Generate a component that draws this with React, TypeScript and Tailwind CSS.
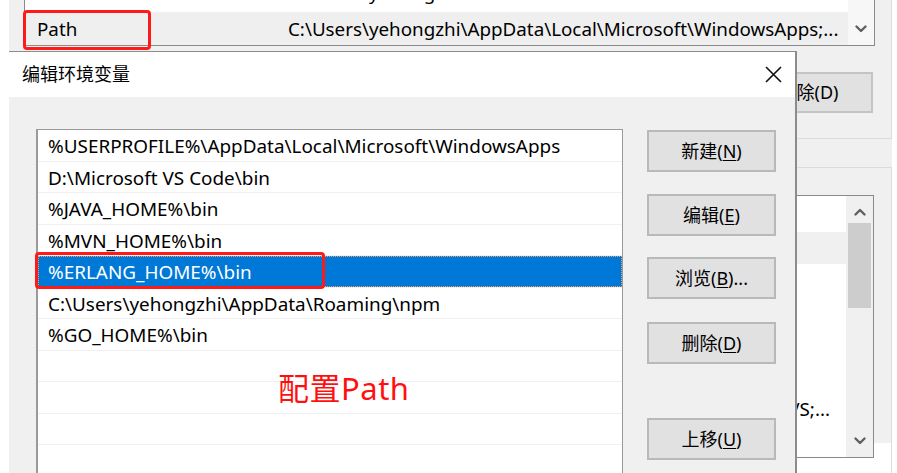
import type { ReactNode } from 'react';

const pathEntries = [
  '%USERPROFILE%\\AppData\\Local\\Microsoft\\WindowsApps',
  'D:\\Microsoft VS Code\\bin',
  '%JAVA_HOME%\\bin',
  '%MVN_HOME%\\bin',
  '%ERLANG_HOME%\\bin',
  'C:\\Users\\yehongzhi\\AppData\\Roaming\\npm',
  '%GO_HOME%\\bin',
  '',
  '',
  '',
  '',
  '',
];

const SELECTED = 4;

function Chevron({ up = false }: { up?: boolean }) {
  return (
    <svg width="12" height="8" viewBox="0 0 12 8" fill="none">
      <polyline
        points={up ? '1.5,6.5 6,2 10.5,6.5' : '1.5,1.5 6,6 10.5,1.5'}
        stroke="#606060"
        strokeWidth="2.4"
        strokeLinecap="round"
        strokeLinejoin="round"
      />
    </svg>
  );
}

function WinButton({ children, className = '' }: { children: ReactNode; className?: string }) {
  return (
    <div
      className={`flex h-[42px] w-[129px] items-center justify-center border-2 border-[#b9b9b9] bg-[#e1e1e1] text-[18px] text-black ${className}`}
    >
      {children}
    </div>
  );
}

// the "环境变量" window sitting behind the dialog
function ParentWindow() {
  return (
    <div className="ml-[9px] h-full w-[883px] bg-[#f0f0f0]">
      {/* user variables group */}
      <div className="-mt-[30px] flex h-[169px] flex-col border-r border-b border-[#dcdcdc] pt-[9px]">
        <div className="ml-[15px] flex h-[67px] w-[851px] border border-[#8a8a8a] bg-white text-[18.8px]">
          <div className="flex-1">
            <div className="flex h-[32px] items-center pb-[5px]">
              <span className="w-[263px] pl-[12px]">OneDrive</span>
              <span>C:\Users\yehongzhi\OneDrive</span>
            </div>
            <div className="flex h-[33px] items-center bg-[#efefef] pt-[2px]">
              <span className="w-[263px] pl-[12px]">Path</span>
              <span>C:\Users\yehongzhi\AppData\Local\Microsoft\WindowsApps;...</span>
            </div>
          </div>
          <div className="flex w-[26px] items-end justify-center bg-[#f7f7f7] pb-[12px]">
            <Chevron />
          </div>
        </div>
        <div className="mt-[26px] flex justify-end pr-[18px]">
          <div className="flex h-[41px] w-[129px] items-center justify-center border-2 border-[#c4c4c4] bg-[#e1e1e1] text-[18px]">
            删除(D)
          </div>
        </div>
      </div>

      {/* system variables group */}
      <div className="mt-[28px] flex h-[320px] justify-end border-t border-r border-[#dcdcdc] pt-[27px] pr-[17px]">
        <div className="flex h-[263px] w-[560px] border border-[#8a8a8a] bg-white text-[18.8px]">
          <div className="flex-1">
            <div className="h-[36px]" />
            <div className="h-[32px] bg-[#f0f0f0]" />
            {Array.from({ length: 4 }).map((_, i) => (
              <div key={i} className="h-[32px]" />
            ))}
            <div className="flex h-[32px] items-center justify-end pt-[2px] pr-[16px]">
              <span>D:\Microsoft VS;...</span>
            </div>
          </div>
          <div className="flex w-[27px] flex-col bg-[#f0f0f0]">
            <div className="flex h-[27px] items-center justify-center pt-[4px]">
              <Chevron up />
            </div>
            <div className="mx-[2px] h-[85px] bg-[#cdcdcd]" />
            <div className="flex-1" />
            <div className="flex h-[30px] items-center justify-center pb-[2px]">
              <Chevron />
            </div>
          </div>
        </div>
      </div>
    </div>
  );
}

function EditDialog() {
  return (
    <div className="absolute top-[51px] left-[9px] flex h-[440px] w-[788px] flex-col border-t border-r-2 border-[#8c8c8c] bg-[#f0f0f0]">
      <div className="flex h-[45px] shrink-0 items-center justify-between bg-white pr-[13px] pl-[13px]">
        <span className="text-[18px]">编辑环境变量</span>
        <svg width="17" height="17" viewBox="0 0 17 17">
          <path d="M1 1L16 16M16 1L1 16" stroke="#111" strokeWidth="1.6" />
        </svg>
      </div>

      <div className="flex pt-[32px] pl-[27px]">
        <div className="h-[400px] w-[587px] overflow-hidden border border-l-2 border-[#9a9a9a] bg-white text-[18.9px]">
          {pathEntries.map((entry, i) => (
            <div key={i} className="h-[31.5px] border-b border-[#f0f0f0]">
              {i === SELECTED ? (
                <div className="flex h-full items-center bg-[#0078d7] pt-[2px] pl-[10px] text-white outline-1 -outline-offset-1 outline-[#e9a46a] outline-dotted">
                  {entry}
                </div>
              ) : (
                <div className="flex h-full items-center pt-[2px] pl-[10px]">{entry}</div>
              )}
            </div>
          ))}
        </div>

        <div className="ml-[24px] flex flex-col">
          <WinButton className="mt-[1px]">
            新建(<span className="underline underline-offset-2">N</span>)
          </WinButton>
          <WinButton className="mt-[22px]">
            编辑(<span className="underline underline-offset-2">E</span>)
          </WinButton>
          <WinButton className="mt-[21px]">
            浏览(<span className="underline underline-offset-2">B</span>)...
          </WinButton>
          <WinButton className="mt-[23px]">
            删除(<span className="underline underline-offset-2">D</span>)
          </WinButton>
          <WinButton className="mt-[54px]">
            上移(<span className="underline underline-offset-2">U</span>)
          </WinButton>
        </div>
      </div>
    </div>
  );
}

export default function App() {
  return (
    <div className="relative h-[473px] w-[897px] overflow-hidden bg-white font-['Noto_Sans','Noto_Sans_CJK_SC',sans-serif] text-[18px] text-black">
      <ParentWindow />
      <EditDialog />

      {/* red annotations */}
      <div className="absolute top-[10px] left-[23px] h-[40px] w-[128px] rounded-[4px] border-[3px] border-[#ff1a1a]" />
      <div className="absolute top-[252px] left-[35px] h-[37px] w-[290px] rounded-[4px] border-[3px] border-[#ff1a1a]" />
      <div className="absolute top-[373px] left-[278px] text-[31px] leading-none tracking-[0.5px] text-[#ff1010]">配置Path</div>
    </div>
  );
}
